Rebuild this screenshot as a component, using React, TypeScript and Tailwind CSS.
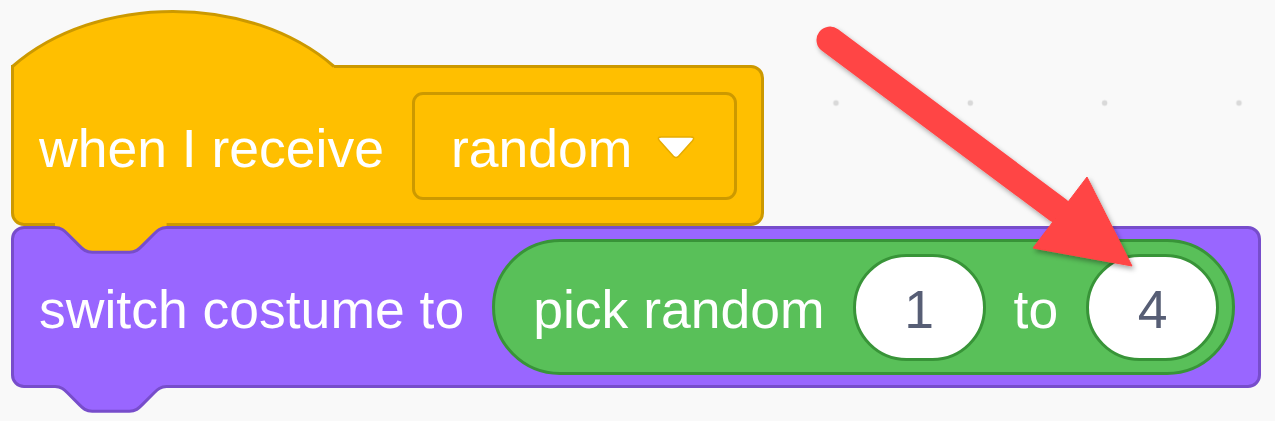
const font = "font-['Liberation_Sans',Arial,Helvetica,sans-serif]";

// scratch notch (36x8 units) scaled to the picture
const notch =
  'c 6.2,0 9.3,3.1 12.4,6.2 l 12.4,12.4 c 3.1,3.1 6.2,6.2 12.4,6.2 h 37.2 c 6.2,0 9.3,-3.1 12.4,-6.2 l 12.4,-12.4 c 3.1,-3.1 6.2,-6.2 12.4,-6.2';

function Label({ children }: { children: string }) {
  return <span className="mt-[6px] whitespace-nowrap text-white">{children}</span>;
}

function NumberInput({ value }: { value: string }) {
  return (
    <div className="flex h-[107px] w-[133px] items-center justify-center rounded-full border-[3px] border-[#389438] bg-white text-[#575E75]">
      <span className="mt-[6px]">{value}</span>
    </div>
  );
}

function HatBlock() {
  return (
    <div className="relative flex h-[161px] items-center gap-[28px] rounded-tr-[13px] rounded-b-[13px] border-[3px] border-[#CC9900] bg-[#FFBF00] pl-[25px] pr-[24px]">
      <svg className="absolute left-[-3px] top-[-64px] overflow-visible" width="326" height="70">
        <path d="M3 62.5 L1.5 62.5 C85 -11 239 -11 323 62.5 L323 70 L3 70 Z" fill="#FFBF00" />
        <path d="M1.5 67 L1.5 62.5 C85 -11 239 -11 323 62.5" fill="none" stroke="#CC9900" strokeWidth="3" />
      </svg>
      <Label>when I receive</Label>
      <div className="flex h-[108px] items-center rounded-[11px] border-[3px] border-[#CC9900] bg-[#FFBF00] pl-[36px] pr-[38px]">
        <Label>random</Label>
        <svg className="ml-[24px] mt-[4px]" width="40" height="27" viewBox="0 0 40 27">
          <path
            d="M5 3 H35 Q39.5 3 36.5 6.8 L22.6 22.2 Q20 25 17.4 22.2 L3.5 6.8 Q0.5 3 5 3 Z"
            fill="#ffffff"
            stroke="#E6AC00"
            strokeWidth="1.5"
          />
        </svg>
      </div>
    </div>
  );
}

function CostumeBlock() {
  return (
    <div className="relative flex h-[162px] items-center gap-[28px] rounded-[13px] border-[3px] border-[#774DCB] bg-[#9966FF] pl-[25px] pr-[23px]">
      {/* notch of the hat block sitting in this block's top */}
      <svg className="absolute left-[-3px] top-[-7px] overflow-visible" width="170" height="40">
        <path d={`M44 0 V5.5 ${notch} V0 Z`} fill="#FFBF00" />
        <path d={`M42 5.5 H44 ${notch} h 2`} fill="none" stroke="#774DCB" strokeWidth="3" />
      </svg>
      <svg className="absolute left-[-3px] top-full overflow-visible" width="170" height="30">
        <path d={`M44 0 V1.5 ${notch} V0 Z`} fill="#9966FF" />
        <path d={`M42 1.5 H44 ${notch} h 2`} fill="none" stroke="#774DCB" strokeWidth="3" />
      </svg>
      <Label>switch costume to</Label>
      <div className="flex h-[136px] items-center gap-[28px] rounded-full border-[3px] border-[#389438] bg-[#59C059] pl-[38px] pr-[13px]">
        <Label>pick random</Label>
        <NumberInput value="1" />
        <Label>to</Label>
        <NumberInput value="4" />
      </div>
    </div>
  );
}

export default function App() {
  return (
    <div
      className={`relative h-[421px] w-[1275px] overflow-hidden bg-[#f9f9f9] bg-[radial-gradient(circle,#d9d9d9_2.5px,transparent_3.2px)] bg-[length:134.33px_134.33px] bg-[position:97.2px_35.85px] pl-[11px] pt-[65px] text-[53.5px] leading-none ${font}`}
    >
      <div className="flex flex-col items-start">
        <HatBlock />
        <CostumeBlock />
      </div>

      {/* annotation arrow */}
      <svg className="pointer-events-none absolute inset-0" width="1275" height="421" viewBox="0 0 1275 421">
        <defs>
          <filter id="arrowShadow" x="-10%" y="-10%" width="130%" height="130%">
            <feDropShadow dx="2" dy="3" stdDeviation="2.5" floodColor="#000" floodOpacity="0.35" />
          </filter>
        </defs>
        <g filter="url(#arrowShadow)" fill="#FF4444" stroke="#FF4444">
          <line x1="830" y1="40" x2="1058" y2="210" strokeWidth="27" strokeLinecap="round" />
          <polygon points="1087,177 1033,248 1132,266" strokeWidth="1" strokeLinejoin="round" />
        </g>
      </svg>
    </div>
  );
}
